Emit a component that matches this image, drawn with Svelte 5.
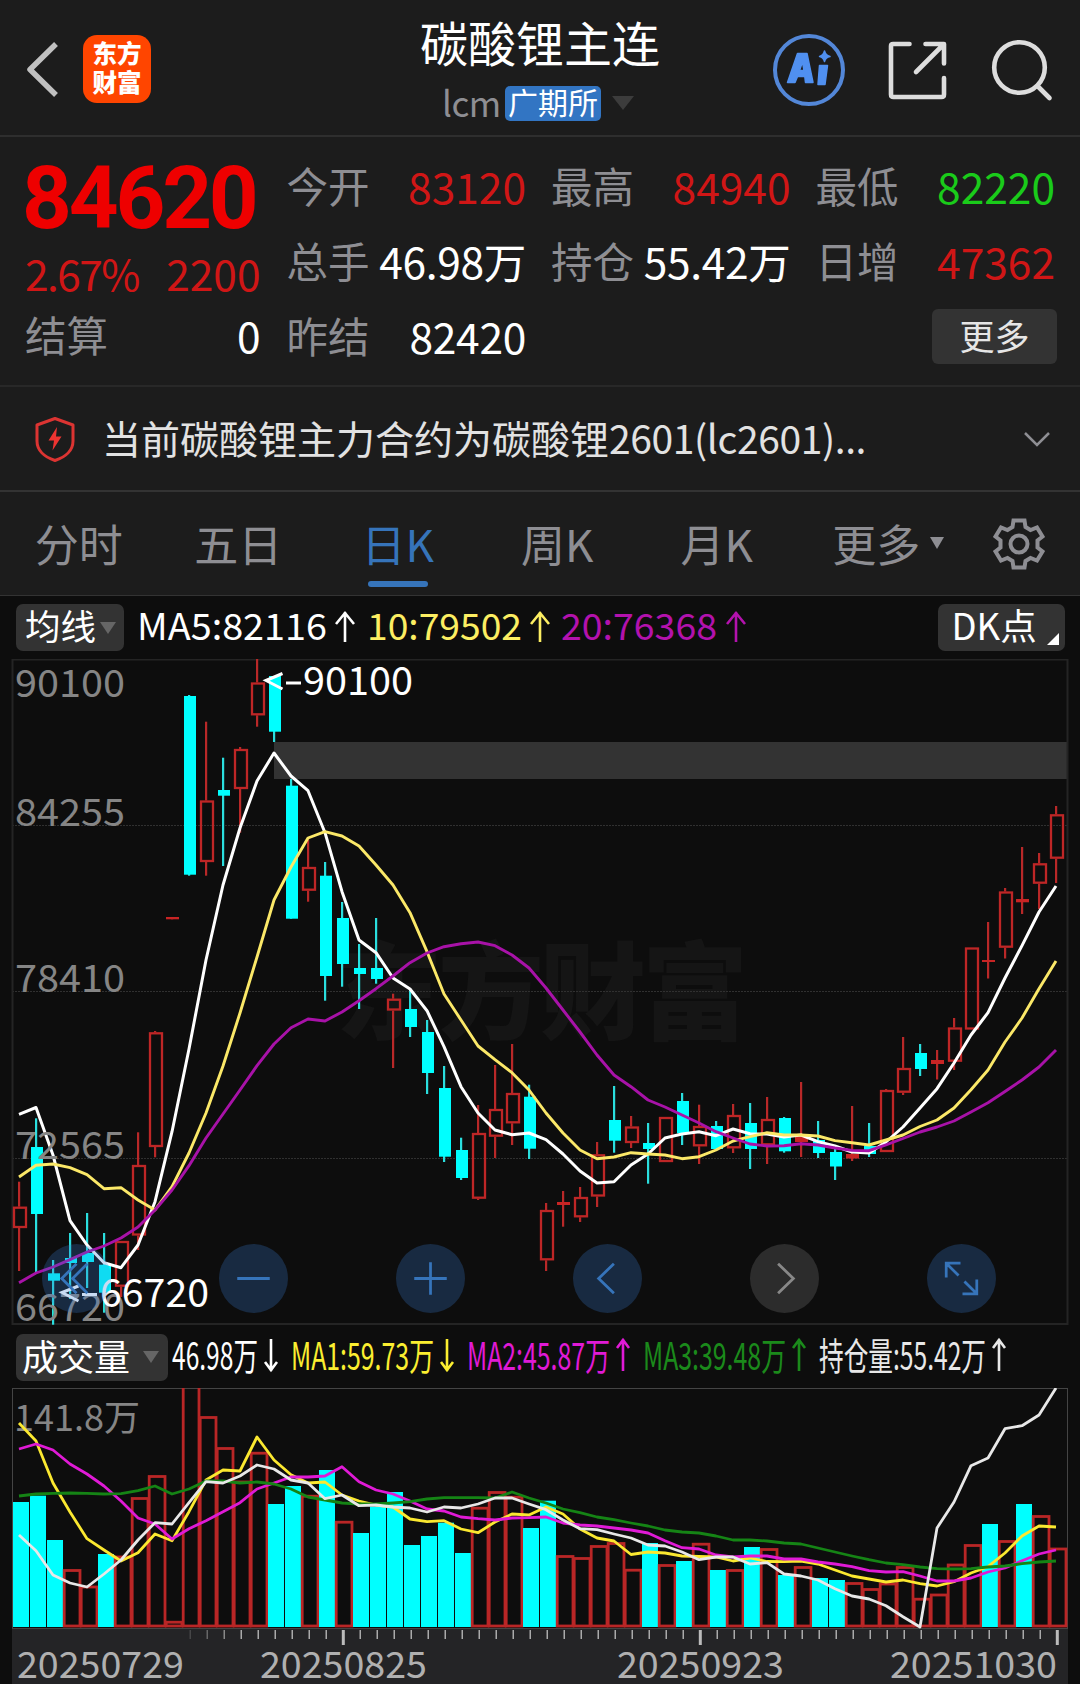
<script lang="ts">
  const quotes = [
    { label: "今开", value: "83120", tone: "up" },
    { label: "最高", value: "84940", tone: "up" },
    { label: "最低", value: "82220", tone: "down" },
    { label: "总手", value: "46.98万", tone: "flat" },
    { label: "持仓", value: "55.42万", tone: "flat" },
    { label: "日增", value: "47362", tone: "up" },
    { label: "昨结", value: "82420", tone: "flat" },
  ];

  const tabs = ["分时", "五日", "日K", "周K", "月K", "更多"];
  let active = "日K";

  const maLegend = [
    { text: "MA5:82116", x: 137, w: 190, arrow: 345, up: true, color: "#fff" },
    { text: "10:79502", x: 367, w: 155, arrow: 540, up: true, color: "#fcee62" },
    { text: "20:76368", x: 561, w: 156, arrow: 736, up: true, color: "#b312ad" },
  ];

  const volLegend = [
    { text: "46.98万", x: 172, w: 86, arrow: 271, up: false, color: "#fff" },
    { text: "MA1:59.73万", x: 291, w: 143, arrow: 447, up: false, color: "#fbee30" },
    { text: "MA2:45.87万", x: 467, w: 143, arrow: 623, up: true, color: "#e01ad6" },
    { text: "MA3:39.48万", x: 643, w: 143, arrow: 799, up: true, color: "#1b8a1b" },
    { text: "持仓量:55.42万", x: 819, w: 167, arrow: 999, up: true, color: "#e8e8e8" },
  ];

  // r = rising (hollow), f = falling, s = rising with a flat body
  // [kind, high, body top, body bottom, low]
  const candles: [string, number, number, number, number][] = [
    ["r", 1181.7, 1206.7, 1228, 1271],
    ["f", 1118.3, 1147, 1214, 1272.7],
    ["f", 1260, 1273.3, 1280.7, 1324.7],
    ["f", 1233, 1258, 1263, 1299],
    ["f", 1213, 1253, 1262, 1288],
    ["f", 1233, 1264.7, 1292.7, 1312.7],
    ["r", 1241, 1241, 1286.7, 1297],
    ["r", 1132.3, 1165, 1235.5, 1250],
    ["r", 1031, 1032.3, 1147, 1157.3],
    ["d", 917, 917, 919.3, 919.3],
    ["f", 695, 696, 874.7, 875.7],
    ["r", 721.7, 800.5, 862, 875.7],
    ["f", 757.7, 790, 795.7, 866],
    ["r", 747, 749, 789, 832.7],
    ["r", 659, 682.5, 715.3, 726.7],
    ["f", 676, 676, 731.7, 742],
    ["f", 779, 785.7, 918.7, 918.7],
    ["r", 839.3, 867, 890.7, 901.7],
    ["f", 862, 875.7, 976, 1000.7],
    ["f", 902, 918, 964, 986.7],
    ["f", 944, 968, 974, 1009],
    ["f", 918, 968, 979, 983.7],
    ["r", 993.7, 998.7, 1010.5, 1068],
    ["f", 990, 1009, 1027, 1037],
    ["f", 1020, 1032, 1073, 1094],
    ["f", 1066, 1088, 1156.7, 1162],
    ["f", 1137.7, 1150, 1178, 1180],
    ["r", 1105, 1133, 1198.7, 1200],
    ["r", 1065, 1109, 1136.7, 1158],
    ["r", 1044, 1093, 1123.3, 1145],
    ["f", 1084.7, 1096.7, 1148.7, 1159],
    ["r", 1203, 1210, 1260.3, 1271],
    ["s", 1191, 1202, 1205, 1226.7],
    ["r", 1187, 1197, 1217.3, 1222],
    ["r", 1142, 1154.3, 1196.5, 1207],
    ["f", 1086, 1120, 1140.7, 1152.7],
    ["r", 1116, 1126.5, 1143, 1148],
    ["f", 1123, 1143, 1149, 1183.7],
    ["r", 1117, 1117, 1162, 1162],
    ["f", 1093, 1101, 1133.3, 1145],
    ["r", 1104.7, 1126, 1146.3, 1164],
    ["f", 1121, 1126, 1149, 1149],
    ["r", 1104, 1115, 1148.3, 1153],
    ["f", 1103, 1123, 1149, 1169],
    ["r", 1097, 1119, 1145.3, 1164],
    ["f", 1117, 1118, 1151.3, 1152.7],
    ["s", 1082, 1136.5, 1142, 1157],
    ["f", 1121, 1140, 1153, 1158],
    ["f", 1148, 1152, 1166.5, 1180],
    ["s", 1106, 1154, 1158.5, 1161],
    ["f", 1123, 1146, 1154, 1157],
    ["r", 1089, 1090, 1152, 1152],
    ["r", 1037, 1068, 1092.7, 1095],
    ["f", 1044, 1053, 1069, 1076],
    ["s", 1050, 1060, 1064, 1079.5],
    ["r", 1018, 1027.5, 1061.7, 1070],
    ["r", 947.5, 947.5, 1029.5, 1029.5],
    ["s", 922, 960, 962, 978.5],
    ["r", 888, 891.5, 947.7, 958.5],
    ["s", 847, 899, 902.3, 914],
    ["r", 853, 863.3, 883.7, 909],
    ["r", 806, 814.3, 858.7, 883],
  ];

  const priceLines = [
    {
      color: "#ffffff",
      width: 3,
      ys: [
        1114.3, 1107.5, 1155, 1220.7, 1245, 1262.7, 1267.7, 1245, 1201.7, 1131.7, 1049, 960, 885, 828,
        781, 753, 776, 790.7, 832.7, 891.7, 940, 952.7, 978, 989, 1010.7, 1046.7, 1086.7, 1113, 1130,
        1134.7, 1133, 1139.7, 1154, 1171, 1183, 1181.7, 1165, 1154, 1138, 1134, 1131.7, 1135.7, 1129,
        1133.7, 1134, 1137, 1135, 1141.6, 1146, 1152, 1153, 1142, 1127, 1108, 1088.7, 1063, 1035,
        1012.6, 978, 945.6, 912, 886,
      ],
    },
    {
      color: "#fbe868",
      width: 2.9,
      ys: [
        1177, 1165.3, 1164, 1167.7, 1174.7, 1188.7, 1187.7, 1200, 1210, 1186.7, 1153, 1113, 1066, 1013,
        957, 900, 867, 838, 831.7, 836, 846, 865, 885, 912.7, 951.7, 994, 1020, 1046, 1059.7, 1072.7,
        1090, 1113, 1133, 1150, 1158.7, 1157, 1152.7, 1154, 1155, 1158.7, 1156.7, 1150, 1141, 1136.7,
        1132.7, 1135, 1135, 1136, 1140.6, 1142.7, 1145, 1140, 1135, 1126.5, 1120, 1108, 1089.7, 1070,
        1042, 1018, 988.7, 961,
      ],
    },
    {
      color: "#a812a8",
      width: 2.9,
      ys: [
        1282.7, 1273, 1267, 1259.7, 1252, 1246, 1238, 1227, 1210, 1190, 1165.7, 1138, 1114, 1090,
        1065.7, 1044, 1027.7, 1019, 1021, 1012, 1000.7, 988.7, 976, 962.7, 953, 946.7, 943.7, 942,
        945.7, 955, 968, 988, 1010, 1032, 1055, 1075, 1086.7, 1100, 1107, 1115, 1123, 1131.7, 1138,
        1144, 1146, 1145.7, 1143.7, 1145, 1148, 1150.4, 1150.7, 1144.8, 1138.5, 1132, 1127, 1121,
        1112, 1102.7, 1091.5, 1080, 1067, 1050,
      ],
    },
  ];

  const volumeKinds = "fffrrfrrrrrrrrrffrfrfffffffrrrffrrrrrfrfrfrfrfrffrrrrrrrrfrfrr";
  const volumeTops = [
    1502, 1495.7, 1540, 1569, 1585.5, 1554, 1555.5, 1497, 1475, 1620.7, 1380, 1416, 1447, 1480.5,
    1451.7, 1504, 1486, 1494.7, 1470, 1520.7, 1533, 1506.7, 1492, 1545, 1536, 1522.7, 1553, 1506.7,
    1491, 1495.7, 1528, 1500.7, 1555, 1557, 1545, 1542, 1568.7, 1543, 1564, 1561, 1542.7, 1570, 1569,
    1547, 1548, 1575, 1566, 1578, 1580, 1582, 1588, 1582.5, 1566, 1597.7, 1593.5, 1563.5, 1544, 1524,
    1540, 1504, 1515, 1547.5,
  ];

  const volumeLines = [
    {
      color: "#fbe830",
      ys: [
        1423, 1441, 1483, 1512, 1538.7, 1550, 1561, 1552.7, 1534, 1540.7, 1511.7, 1480, 1470, 1471,
        1437, 1460, 1474.7, 1483, 1482, 1495, 1501, 1505, 1507, 1519, 1521.7, 1520.7, 1529, 1532.7,
        1522, 1514, 1515, 1507, 1514, 1529, 1538, 1541, 1554.5, 1552, 1553, 1556, 1556.5, 1557, 1561,
        1558, 1561.5, 1561.7, 1561, 1564, 1570, 1576, 1579, 1582, 1580, 1583.7, 1586, 1581.7, 1573,
        1566.7, 1553, 1536, 1526, 1527,
      ],
    },
    {
      color: "#e01ad6",
      ys: [
        1449, 1444, 1450, 1464, 1474, 1486, 1501, 1518, 1524, 1539, 1528.7, 1520.7, 1511.7, 1502.7,
        1489, 1483, 1477, 1477, 1476, 1466.7, 1481.7, 1490, 1494, 1501, 1509, 1511, 1517, 1518.7, 1520,
        1518, 1517.7, 1517, 1523, 1525, 1526, 1528, 1530, 1533, 1540.7, 1547.7, 1549, 1555, 1557, 1556,
        1556, 1559, 1559, 1562, 1564, 1566.7, 1570.7, 1572, 1571.7, 1576, 1581, 1581, 1578, 1572, 1568,
        1560.7, 1554, 1550,
      ],
    },
    {
      color: "#158415",
      ys: [
        1496, 1494, 1493.3, 1493, 1493.3, 1494, 1493.7, 1490.7, 1486, 1494, 1489, 1481, 1481, 1483,
        1482, 1484, 1489, 1497, 1500, 1503, 1504, 1504, 1503, 1501.7, 1499, 1497.7, 1497.7, 1497.7,
        1498, 1492, 1498, 1503, 1509, 1512.7, 1517, 1519.7, 1523, 1526, 1530, 1532, 1533, 1536, 1540,
        1540, 1541, 1543, 1544, 1548, 1552, 1556, 1559.7, 1563, 1564.7, 1567, 1568.7, 1569, 1568.7,
        1567, 1566, 1563.7, 1562, 1561,
      ],
    },
    {
      color: "#e8e8e8",
      ys: [
        1535, 1550.7, 1575, 1583, 1587, 1574, 1560, 1540, 1522.7, 1524, 1502.7, 1481.7, 1483, 1476,
        1465, 1469, 1480, 1483, 1498.7, 1495, 1505.7, 1505, 1507, 1508, 1512, 1507, 1508, 1504, 1498,
        1498, 1504, 1509.7, 1520, 1528.7, 1529.7, 1534, 1538, 1545, 1546, 1552, 1559.7, 1557, 1557,
        1564, 1562.7, 1574, 1576, 1580, 1588.7, 1596, 1599, 1605.7, 1616.7, 1627, 1528, 1502, 1465.7,
        1458, 1428.7, 1425.7, 1415, 1388,
      ],
    },
  ];

  const priceLabels = [
    ["90100", 697],
    ["84255", 826],
    ["78410", 991.5],
    ["72565", 1159],
    ["66720", 1321],
  ];

  const dates = [
    ["20250729", 17],
    ["20250825", 260],
    ["20250923", 617],
    ["20251030", 890],
  ];

  const centerX = (i: number) => 19 + 17 * i;
  const points = (ys: number[]) => ys.map((y, i) => `${centerX(i)},${y}`).join(" ");
  const arrow = (x: number, up: boolean, top: number, bottom: number, r: number) =>
    up
      ? `M${x} ${bottom}V${top}M${x - r} ${top + r + 3}L${x} ${top + 1}L${x + r} ${top + r + 3}`
      : `M${x} ${top}V${bottom}M${x - r} ${bottom - r - 3}L${x} ${bottom - 1}L${x + r} ${bottom - r - 3}`;
</script>

<main class="page">
  <header class="header">
    <svg class="back" width="36" height="60" viewBox="0 0 36 60">
      <path d="M32 5L6 30.500L32 56" />
    </svg>
    <div class="logo"><span>东方</span><span>财富</span></div>
    <div class="title">
      <h1>碳酸锂主连</h1>
      <div class="subtitle">
        <span class="code">lcm</span>
        <span class="badge">广期所</span>
        <i class="caret"></i>
      </div>
    </div>
    <div class="tools">
      <svg width="74" height="74" viewBox="0 0 74 74">
        <circle cx="37" cy="37" r="34" fill="none" stroke="#5387d8" stroke-width="4" />
        <g fill="#5090f0" stroke="#5090f0" stroke-width="1.5" stroke-linejoin="round">
          <path
            fill-rule="evenodd"
            d="M25.500 20.500H35L41 49.500H33.500L32.800 43.500H25.500L23 49.500H15.500ZM30.500 29L27.500 37.500H32Z"
          />
          <path d="M47.500 32.500H55.500L53 51.500H46Z" />
          <path d="M52.500 18Q53.500 22.500 58 23.500Q53.500 24.500 52.500 28.500Q51.500 24.500 47.500 23.500Q51.500 22.500 52.500 18Z" />
        </g>
      </svg>
      <svg width="62" height="62" viewBox="0 0 62 62" class="line">
        <path d="M22.500 5H6Q4 5 4 7V55.500Q4 58 6.500 58H54.500Q57 58 57 55.500V39M38.500 5H57V24.500M56 6L29 33" />
      </svg>
      <svg width="64" height="64" viewBox="0 0 64 64" class="line">
        <circle cx="30.500" cy="29.500" r="25.300" />
        <path d="M49 48.500L60.500 60" />
      </svg>
    </div>
  </header>

  <section class="quote">
    <div class="last">
      <strong>84620</strong>
      <div class="change"><span>2.67%</span><span>2200</span></div>
      <div class="settle"><span class="label">结算</span><span>0</span></div>
    </div>
    <div class="grid">
      {#each quotes as q}
        <div class="cell">
          <span class="label">{q.label}</span>
          <span class={q.tone}>{q.value}</span>
        </div>
      {/each}
      <div></div>
      <div class="cell end"><button class="more">更多</button></div>
    </div>
  </section>

  <section class="notice">
    <svg width="44" height="48" viewBox="0 0 44 48">
      <path
        d="M22 3.500L40 10V26C40 35 33 42 22 45.500C11 42 4 35 4 26V10Z"
        fill="none"
        stroke="#dc3432"
        stroke-width="3"
        stroke-linejoin="round"
      />
      <path d="M24 12L15.500 25.500H21L19.500 35.500L28.500 21.500H23Z" fill="#ee3431" />
    </svg>
    <p>当前碳酸锂主力合约为碳酸锂<span>2601(lc2601)...</span></p>
    <svg width="28" height="18" viewBox="0 0 28 18">
      <path d="M2 3L14 15L26 3" fill="none" stroke="#8e8e93" stroke-width="2.500" />
    </svg>
  </section>

  <nav class="tabs">
    {#each tabs as tab}
      <button class="tab" class:active={tab === active} on:click={() => (active = tab)}>
        {tab}
        {#if tab === "更多"}<i class="tab__caret"></i>{/if}
      </button>
    {/each}
    <svg width="56" height="56" viewBox="-28 -28 56 56">
      <path
        d="M-5.500 -23.500H5.500L6.500 -17L11.500 -14L18 -16.500L23.500 -7.500L18.500 -3.500V3.500L23.500 7.500L18 16.500L11.500 14L6.500 17L5.500 23.500H-5.500L-6.500 17L-11.500 14L-18 16.500L-23.500 7.500L-18.500 3.500V-3.500L-23.500 -7.500L-18 -16.500L-11.500 -14L-6.500 -17Z"
      />
      <circle r="8.500" />
    </svg>
  </nav>

  <section class="chart">
    <div class="bar">
      <button class="pill"><span>均线</span><i class="caret"></i></button>
      <svg class="legend" width="800" height="63" viewBox="124 596 800 63">
        {#each maLegend as m}
          <text x={m.x} y="640" textLength={m.w} lengthAdjust="spacingAndGlyphs" font-size="37" fill={m.color}>{m.text}</text>
          <path d={arrow(m.arrow, m.up, 612, 642, 9)} stroke={m.color} />
        {/each}
      </svg>
      <button class="pill pill--dk"><span>DK点</span></button>
    </div>

    <div class="price">
      <svg width="1080" height="667" viewBox="0 659 1080 667">
        <text class="watermark" x="336" y="1031" textLength="412">东方财富</text>
        <rect x="274" y="742" width="793" height="37" fill="#333" />
        {#each [825.5, 991.5, 1158.5] as y}
          <line x1="12" x2="1067" y1={y} y2={y} stroke="#303030" stroke-dasharray="2 1" />
        {/each}
        <rect x="12.500" y="659.500" width="1055" height="664.500" fill="none" stroke="#242424" stroke-width="2" />

        {#each candles as [kind, high, top, bottom, low], i}
          {#if kind === "f"}
            <rect x={centerX(i) - 1} y={high} width="2.200" height={low - high} fill="#2adede" />
            <rect x={centerX(i) - 5} y={top} width="12" height={bottom - top} fill="#0ff" />
          {:else if kind === "r"}
            <rect x={centerX(i) - 1} y={high} width="2.200" height={top - high} fill="#b92828" />
            <rect x={centerX(i) - 1} y={bottom} width="2.200" height={low - bottom} fill="#b92828" />
            <rect x={centerX(i) - 5} y={top + 1} width="12" height={bottom - top - 2} fill="none" stroke="#be2626" stroke-width="2.300" />
          {:else}
            <rect x={centerX(i) - 1} y={high} width="2.200" height={low - high} fill="#b92828" />
            <rect x={centerX(i) - 6} y={top} width="13" height={bottom - top} fill="#c82424" />
          {/if}
        {/each}

        {#each priceLines as line}
          <polyline points={points(line.ys)} stroke={line.color} stroke-width={line.width} fill="none" stroke-linejoin="round" />
        {/each}

        {#each priceLabels as [text, y]}
          <text x="15" {y} textLength="110" lengthAdjust="spacingAndGlyphs" font-size="38.500" fill="#858585">{text}</text>
        {/each}
        <g fill="#fff" font-size="39.500">
          <path class="mark" d="M282.500 673.500L266 680.500L282.500 689M286 683H301" />
          <text x="303" y="695" textLength="110" lengthAdjust="spacingAndGlyphs">90100</text>
          <path class="mark" d="M78.500 1286L62 1292.500L78.500 1301M82 1294.500H97" />
          <text x="100" y="1307" textLength="109" lengthAdjust="spacingAndGlyphs">66720</text>
        </g>
      </svg>

      <div class="controls">
        <button><svg viewBox="-35 -35 70 70"><path d="M0 -15L-15 0L0 15M11 -15L-4 0L11 15" /></svg></button>
        <button><svg viewBox="-35 -35 70 70"><path d="M-16.500 0H16.500" /></svg></button>
        <button><svg viewBox="-35 -35 70 70"><path d="M-16.500 0H16.500M0 -16.500V16.500" /></svg></button>
        <button><svg viewBox="-35 -35 70 70"><path d="M6.500 -15L-9 0L6.500 15" /></svg></button>
        <button class="off"><svg viewBox="-35 -35 70 70"><path d="M-6.500 -15L9 0L-6.500 15" /></svg></button>
        <button>
          <svg viewBox="-35 -35 70 70">
            <path d="M-15.500 -1V-15.500H-1M-15 -15L-3 -3M3 3L15 15M15.500 1V15.500H1" />
          </svg>
        </button>
      </div>
    </div>

    <div class="bar bar--vol">
      <button class="pill pill--vol"><span>成交量</span><i class="caret"></i></button>
      <svg class="legend" width="912" height="62" viewBox="168 1326 912 62">
        {#each volLegend as m}
          <text x={m.x} y="1370" textLength={m.w} lengthAdjust="spacingAndGlyphs" font-size="38" fill={m.color}>{m.text}</text>
          <path d={arrow(m.arrow, m.up, 1339, 1371, 6)} stroke={m.color} />
        {/each}
      </svg>
    </div>

    <svg width="1080" height="296" viewBox="0 1388 1080 296">
      <rect x="12.500" y="1388.500" width="1055" height="240" fill="none" stroke="#444" />
      <text x="14" y="1431" textLength="126" lengthAdjust="spacingAndGlyphs" font-size="36" fill="#858585">141.8万</text>
      {#each volumeTops as top, i}
        {#if volumeKinds[i] === "f"}
          <rect x={13 + 17 * i} y={top} width="16" height={1627 - top} fill="#0ff" />
        {:else}
          <rect x={13.2 + 17 * i} y={top + 1.5} width="15.800" height={1626 - top - 1.5} fill="none" stroke="#b92626" stroke-width="2.800" />
        {/if}
      {/each}
      {#each volumeLines as line}
        <polyline points={points(line.ys)} stroke={line.color} stroke-width="2.800" fill="none" stroke-linejoin="round" />
      {/each}

      <rect x="12" y="1629" width="1056" height="55" fill="#242426" />
      {#each volumeTops as _, i}
        {#if i === 19 || i === 40 || i === 61}
          <rect x={18.8 + 17 * i} y="1630" width="3" height="15" fill="#bbb" />
        {:else if i > 9}
          <rect x={19.5 + 17 * i} y="1630" width="1.500" height="9" fill="#aaa" opacity={Math.min(1, (i - 9) / 4)} />
        {/if}
      {/each}
      {#each dates as [text, x]}
        <text {x} y="1678" textLength="167" lengthAdjust="spacingAndGlyphs" font-size="37" fill="#b0b0b0">{text}</text>
      {/each}
    </svg>
  </section>
</main>

<style>
  :global(body) {
    background: #0d0d0d;
  }

  .page {
    width: 1080px;
    height: 1684px;
    overflow: hidden;
    background: #1c1c1c;
    color: #fff;
    font-family: "Noto Sans CJK SC", sans-serif;
  }

  .page svg {
    display: block;
    flex-shrink: 0;
  }

  button {
    padding: 0;
    border: 0;
    background: none;
    color: inherit;
    font: inherit;
  }

  .label {
    color: #8e8e93;
  }

  .up {
    color: #d01616;
  }

  .down {
    color: #1acb1a;
  }

  .caret {
    width: 0;
    height: 0;
    border: 8px solid transparent;
    border-top: 12px solid #666;
    border-bottom: 0;
  }

  .header {
    display: grid;
    grid-template-columns: 24px 59px 337px 240px 1fr;
    height: 137px;
    box-sizing: border-box;
    border-bottom: 2px solid #2e2e2e;
    & .back {
      grid-column: 2;
      margin-top: 39px;
      fill: none;
      stroke: #c0c0c0;
      stroke-width: 5.5;
      stroke-linejoin: round;
    }
    & .logo {
      width: 68px;
      height: 68px;
      margin-top: 35px;
      padding-top: 3px;
      box-sizing: border-box;
      display: flex;
      flex-direction: column;
      border-radius: 14px;
      background: #ff4500;
      font-size: 24.5px;
      font-weight: 900;
      line-height: 29px;
      text-align: center;
    }
    & .title {
      display: flex;
      flex-direction: column;
    }
    & h1 {
      margin: 12px 0 0;
      font-size: 48px;
      font-weight: 400;
      line-height: 58px;
      white-space: nowrap;
    }
    & .subtitle {
      display: flex;
      align-items: center;
      margin: 15px 0 0 22px;
      height: 36px;
    }
    & .code {
      width: 63px;
      color: #8e8e93;
      font-size: 35px;
      line-height: 34px;
      margin-top: -2px;
      letter-spacing: -0.5px;
    }
    & .badge {
      width: 96px;
      height: 35px;
      border-radius: 5px;
      background: #3275c3;
      font-size: 30px;
      line-height: 31px;
      text-align: center;
    }
    & .caret {
      margin-left: 11px;
      border-width: 14px 11px 0;
      border-top-color: #3c3c3c;
    }
    & .tools {
      display: flex;
      align-items: flex-start;
      margin: 32.5px 0 0 111.5px;
    }
    & .tools svg:nth-child(2) {
      margin: 6px 0 0 41px;
    }
    & .tools svg:nth-child(3) {
      margin: 5px 0 0 40px;
    }
    & .line {
      fill: none;
      stroke: #ddd;
      stroke-width: 4.6;
      stroke-linecap: round;
      stroke-linejoin: round;
    }
  }

  .quote {
    display: flex;
    gap: 26px;
    height: 250px;
    box-sizing: border-box;
    padding: 11px 25px 0 25px;
    border-bottom: 2px solid #282828;
    font-size: 42.5px;
    & .last {
      width: 238px;
    }
    & strong {
      display: block;
      color: #ee0000;
      font-family: Roboto, sans-serif;
      font-size: 87px;
      font-weight: 700;
      line-height: 101px;
      height: 92px;
      letter-spacing: -3.2px;
      white-space: nowrap;
      margin-left: -3px;
    }
    & .change,
    & .settle,
    & .cell {
      display: flex;
      justify-content: space-between;
      white-space: nowrap;
    }
    & .change {
      line-height: 65px;
      color: #d01616;
    }
    & .change span:first-child {
      letter-spacing: -1.6px;
    }
    & .settle {
      line-height: 59px;
    }
    & .settle .label,
    & .cell .label {
      font-size: 41.5px;
    }
    & .grid {
      display: grid;
      grid-template-columns: repeat(3, 239.5px);
      grid-auto-rows: 75px;
      column-gap: 25px;
      line-height: 75px;
    }
    & .flat {
      letter-spacing: -0.3px;
    }
    & .end {
      justify-content: flex-end;
    }
    & .more {
      width: 125px;
      height: 55px;
      margin: 11px -2px 0 0;
      border-radius: 6px;
      background: #333;
      color: #e6e6e6;
      font-size: 35px;
      line-height: 50px;
      padding-bottom: 4px;
    }
  }

  .notice {
    display: flex;
    align-items: center;
    height: 105px;
    box-sizing: border-box;
    padding: 0 29px 0 33px;
    border-bottom: 2px solid #333;
    & p {
      flex-grow: 1;
      margin: 0 0 3px 25px;
      color: #e2e2e2;
      font-size: 39px;
      line-height: 60px;
    }
    & p span {
      letter-spacing: -0.4px;
    }
  }

  .tabs {
    display: flex;
    align-items: center;
    height: 104px;
    box-sizing: border-box;
    border-bottom: 1px solid #333;
    & .tab {
      position: relative;
      width: 159.5px;
      height: 103px;
      padding: 0 2px 2px 0;
      color: #8e8e93;
      font-size: 44px;
      line-height: 98px;
    }
    & .active {
      color: #3674ba;
    }
    & .active::after {
      content: "";
      position: absolute;
      left: 49px;
      bottom: 8px;
      width: 60px;
      height: 6px;
      border-radius: 3px;
      background: #3674ba;
    }
    & .tab__caret {
      position: absolute;
      left: 132px;
      top: 45px;
      border: 7.5px solid transparent;
      border-top: 12px solid #8e8e93;
      border-bottom: 0;
    }
    & svg {
      margin-left: 33.5px;
      fill: none;
      stroke: #8e8e93;
      stroke-width: 4;
    }
  }

  .chart {
    background: #0d0d0d;
  }

  .bar {
    display: flex;
    align-items: center;
    height: 63px;
    padding-left: 16px;
    & .legend path {
      fill: none;
      stroke-width: 2.6;
    }
  }

  .bar--vol {
    height: 62px;
  }

  .pill {
    position: relative;
    width: 108px;
    height: 47px;
    flex-shrink: 0;
    padding-left: 9px;
    display: flex;
    align-items: center;
    border-radius: 7px;
    background: #333;
    font-size: 35.5px;
    line-height: 42px;
    white-space: nowrap;
    & span {
      margin-bottom: 5px;
    }
    & .caret {
      margin-left: 4px;
    }
  }

  .pill--dk {
    width: 127px;
    margin-left: 13.5px;
    padding-left: 14px;
    font-size: 36.5px;
    &::after {
      content: "";
      position: absolute;
      right: 6px;
      bottom: 6px;
      border-left: 12px solid transparent;
      border-bottom: 12px solid #fff;
    }
  }

  .pill--vol {
    width: 152px;
    padding-left: 6px;
    font-size: 36px;
    & .caret {
      margin-left: 13px;
    }
  }

  .price {
    position: relative;
    height: 667px;
    & .watermark {
      fill: #151515;
      font-size: 106px;
      font-weight: 900;
    }
    & .mark {
      fill: none;
      stroke: #fff;
      stroke-width: 3;
    }
  }

  .controls {
    position: absolute;
    left: 42px;
    top: 585px;
    display: flex;
    gap: 108px;
    & button {
      width: 69px;
      height: 69px;
      border-radius: 50%;
      background: rgba(54, 122, 206, 0.27);
    }
    & svg {
      width: 69px;
      height: 69px;
      fill: none;
      stroke: #3674ba;
      stroke-width: 2.8;
    }
    & .off {
      background: #2c2c2c;
    }
    & .off svg {
      stroke: #888;
    }
  }
</style>
